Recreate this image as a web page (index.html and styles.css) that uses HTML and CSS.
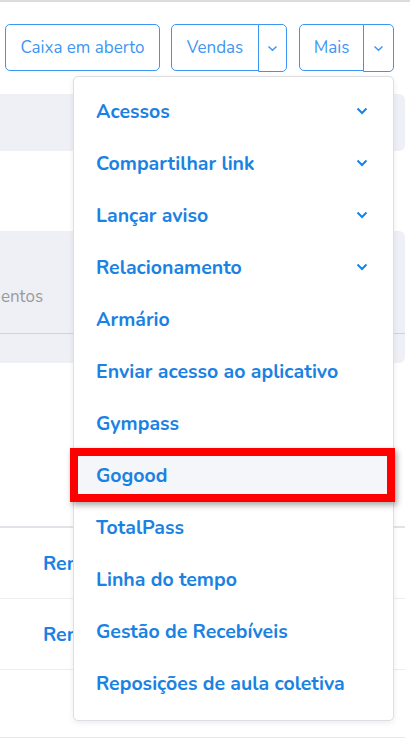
FILE: index.html
```html
<!DOCTYPE html>
<html lang="pt-BR">
<head>
<meta charset="utf-8">
<title>Mais</title>
<link rel="stylesheet" href="styles.css">
</head>
<body>
<div class="page">
  <div class="toolbar">
    <button class="btn caixa">Caixa em aberto</button>
    <div class="split">
      <button class="btn split-main vendas">Vendas</button>
      <button class="btn split-caret"><svg width="11" height="7" viewBox="0 0 11 7"><path d="M1.5 1.5 L5.5 5.3 L9.5 1.5" fill="none" stroke="currentColor" stroke-width="1.5"/></svg></button>
    </div>
    <div class="split">
      <button class="btn split-main mais">Mais</button>
      <button class="btn split-caret"><svg width="11" height="7" viewBox="0 0 11 7"><path d="M1.5 1.5 L5.5 5.3 L9.5 1.5" fill="none" stroke="currentColor" stroke-width="1.5"/></svg></button>
    </div>
  </div>

  <div class="content">
    <div class="band band-a"></div>
    <div class="blank blank-a"></div>
    <div class="band band-b">
      <div class="band-text">Pagamentos</div>
      <div class="band-foot"></div>
    </div>
    <div class="blank blank-b"></div>
    <div class="row"><span class="link">Remover</span></div>
    <div class="row"><span class="link">Remover</span></div>
    <div class="blank blank-c"></div>
  </div>

  <div class="menu">
    <ul class="menu-list">
      <li class="item"><span>Acessos</span><svg class="chev" width="12" height="8" viewBox="0 0 12 8"><path d="M1.5 1.5 L6 6 L10.5 1.5" fill="none" stroke="currentColor" stroke-width="2"/></svg></li>
      <li class="item"><span>Compartilhar link</span><svg class="chev" width="12" height="8" viewBox="0 0 12 8"><path d="M1.5 1.5 L6 6 L10.5 1.5" fill="none" stroke="currentColor" stroke-width="2"/></svg></li>
      <li class="item"><span>Lançar aviso</span><svg class="chev" width="12" height="8" viewBox="0 0 12 8"><path d="M1.5 1.5 L6 6 L10.5 1.5" fill="none" stroke="currentColor" stroke-width="2"/></svg></li>
      <li class="item"><span>Relacionamento</span><svg class="chev" width="12" height="8" viewBox="0 0 12 8"><path d="M1.5 1.5 L6 6 L10.5 1.5" fill="none" stroke="currentColor" stroke-width="2"/></svg></li>
      <li class="item"><span>Armário</span></li>
      <li class="item"><span>Enviar acesso ao aplicativo</span></li>
      <li class="item"><span>Gympass</span></li>
      <li class="item active"><span>Gogood</span></li>
      <li class="item"><span>TotalPass</span></li>
      <li class="item"><span>Linha do tempo</span></li>
      <li class="item"><span>Gestão de Recebíveis</span></li>
      <li class="item"><span>Reposições de aula coletiva</span></li>
    </ul>
  </div>
</div>
</body>
</html>
```

FILE: styles.css
```css
* { box-sizing: border-box; }
html, body { margin: 0; padding: 0; }
body {
  width: 410px;
  height: 740px;
  overflow: hidden;
  background: #fff;
  font-family: "Nunito", "Lato", "Noto Sans", sans-serif;
}
.page {
  position: relative;
  height: 740px;
  border-top: 2px solid #dcdcdc;
}
.toolbar {
  display: flex;
  padding: 22px 0 0 5px;
  height: 92px;
}
.btn {
  font-family: inherit;
  font-size: 17px;
  white-space: nowrap;
  color: #4096f2;
  background: #fff;
  border: 1px solid #3d95f2;
  border-radius: 5px;
  height: 47px;
  padding: 0;
  display: flex;
  align-items: center;
  justify-content: center;
}
.caixa { width: 155px; margin-right: 11px; }
.split { display: flex; }
.split + .split { margin-left: 12px; }
.split-main { border-radius: 5px 0 0 5px; }
.vendas { width: 88px; }
.mais { width: 65px; }
.split-caret {
  width: 29px;
  height: 48px;
  margin-left: -1px;
  border-radius: 0 5px 5px 0;
}
.mais + .split-caret { width: 31px; }

.content { margin-right: 5px; }
.band {
  background: #eef0f5;
  border-radius: 0 6px 6px 0;
}
.band-a { height: 57px; }
.blank-a { height: 80px; }
.band-b {
  height: 132px;
  display: flex;
  flex-direction: column;
}
.band-text {
  flex: 1;
  display: flex;
  align-items: center;
  padding-top: 28px;
  margin-left: -52px;
  font-size: 17px;
  color: #9a9a9a;
}
.band-foot {
  height: 30px;
  border-top: 1px solid #cfd3d9;
}
.blank-b {
  height: 165px;
  border-bottom: 2px solid #e0e3e8;
}
.row {
  height: 71px;
  border-bottom: 1px solid #ebedf0;
  display: flex;
  align-items: center;
  padding-left: 43px;
}
.link {
  font-size: 19.5px;
  font-weight: 700;
  color: #1a82e2;
}
.blank-c {
  height: 68px;
  border-bottom: 1px solid #e6e8eb;
}

.menu {
  position: absolute;
  left: 73px;
  top: 74px;
  width: 321px;
  height: 645px;
  background: #fff;
  border: 1px solid #dcdfe3;
  border-radius: 5px;
  box-shadow: 0 2px 6px rgba(0,0,0,0.08);
  padding: 15px 6px 0 4px;
}
.menu-list {
  list-style: none;
  margin: 0;
  padding: 0;
  display: flex;
  flex-direction: column;
  gap: 14px;
}
.item {
  height: 38px;
  padding: 0 19px 0 18px;
  display: flex;
  align-items: center;
  justify-content: space-between;
  font-size: 19.5px;
  font-weight: 700;
  color: #1a82e2;
}
.chev { color: #1a82e2; }
.active {
  background: #f4f6f9;
  box-shadow: 0 0 0 8px #ff0000, 2px 3px 6px 8px rgba(0,0,0,0.35);
}
```
